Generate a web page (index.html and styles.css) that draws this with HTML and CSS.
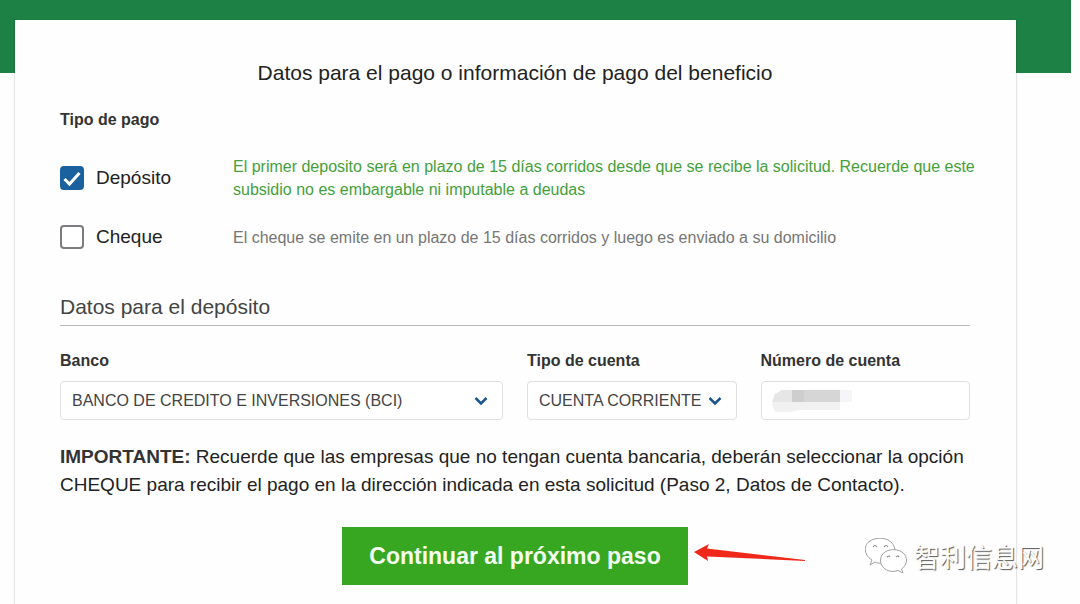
FILE: index.html
```html
<!DOCTYPE html>
<html lang="es">
<head>
<meta charset="utf-8">
<meta name="viewport" content="width=device-width, initial-scale=1">
<title>Datos para el pago</title>
<link rel="stylesheet" href="styles.css">
</head>
<body>
<div class="page">
  <main class="card">
    <h1 class="title">Datos para el pago o información de pago del beneficio</h1>
    <form class="form">
      <fieldset class="payment">
        <legend class="label">Tipo de pago</legend>
        <div class="option">
          <label class="choice">
            <span class="box">
              <input class="check" type="checkbox" name="deposito" checked>
              <svg class="tick" viewBox="0 0 24 24" aria-hidden="true"><path d="M4.5 13 9.5 18 19.5 7" fill="none" stroke="#fff" stroke-width="3"/></svg>
            </span>
            Depósito
          </label>
          <p class="hint hint-active">El primer deposito será en plazo de 15 días corridos desde que se recibe la solicitud. Recuerde que este subsidio no es embargable ni imputable a deudas</p>
        </div>
        <div class="option">
          <label class="choice">
            <span class="box"><input class="check" type="checkbox" name="cheque"></span>
            Cheque
          </label>
          <p class="hint">El cheque se emite en un plazo de 15 días corridos y luego es enviado a su domicilio</p>
        </div>
      </fieldset>

      <h2 class="subtitle">Datos para el depósito</h2>
      <div class="fields">
        <div class="field field-wide">
          <label class="label" for="banco">Banco</label>
          <div class="select">
            <select class="control" id="banco"><option>BANCO DE CREDITO E INVERSIONES (BCI)</option></select>
            <svg class="chevron" viewBox="0 0 14 10" aria-hidden="true"><path d="M1.5 2 7 7.5 12.500 2" fill="none" stroke="#1b5590" stroke-width="2.500"/></svg>
          </div>
        </div>
        <div class="field">
          <label class="label" for="tipo">Tipo de cuenta</label>
          <div class="select">
            <select class="control" id="tipo"><option>CUENTA CORRIENTE</option></select>
            <svg class="chevron" viewBox="0 0 14 10" aria-hidden="true"><path d="M1.5 2 7 7.5 12.500 2" fill="none" stroke="#1b5590" stroke-width="2.500"/></svg>
          </div>
        </div>
        <div class="field">
          <label class="label" for="numero">Número de cuenta</label>
          <div class="select">
            <input class="control" id="numero" type="text">
            <svg class="mask" viewBox="0 0 80 22" aria-hidden="true">
              <path d="M3 4 10 0H68V20H28L18 22H3L0 15Z" fill="#f1f1f1"/>
              <path d="M68 0H80V12H68Z" fill="#f6f6f8"/>
              <path d="M3 4 10 0H20V12H0Z" fill="#e6e6e6"/>
              <path d="M20 0H68V12H20Z" fill="#d6d6d6"/>
              <path d="M20 0H32V12H20Z" fill="#cecece"/>
            </svg>
          </div>
        </div>
      </div>

      <p class="notice"><strong>IMPORTANTE:</strong> Recuerde que las empresas que no tengan cuenta bancaria, deberán seleccionar la opción CHEQUE para recibir el pago en la dirección indicada en esta solicitud (Paso 2, Datos de Contacto).</p>

      <div class="actions">
        <button class="submit" type="button">Continuar al próximo paso</button>
        <svg class="arrow" viewBox="0 0 112 20" aria-hidden="true"><path d="M0 9 15 1 13 5.500 111 17V18L13 13.500 14 18Z" fill="#f0281a"/></svg>
      </div>
    </form>
  </main>
  <div class="watermark">
    <svg class="bubbles" viewBox="0 0 44 36" aria-hidden="true">
      <g fill="#fff" stroke="#a0a0a0" stroke-width="1" stroke-linejoin="round">
        <path d="M5 27 7 22C-2 17-1 6 5 3 15-3 29 1 30 12L18 25C15 25.500 12 25 10 24Z"/>
        <path d="M38 35 33 32.500C25 35.500 16 31 15.500 23 15 8 41 8 41.500 22 41.500 26 39.500 29 36.500 31Z"/>
      </g>
      <g fill="none" stroke="#8c8c8c" stroke-width="1.200">
        <path d="M8 9q2-3 4 0M19 9q2-3 4 0M22 19q2-2 3 0M31 19q2-2 3 0"/>
      </g>
    </svg>
    <span>智利信息网</span>
  </div>
</div>
</body>
</html>
```
FILE: styles.css
```css
* { box-sizing: border-box; }

body {
  margin: 0;
  background: #fefefe;
  color: #222;
  font-family: "Liberation Sans", Arial, "Noto Sans CJK SC", sans-serif;
}

.page {
  position: relative;
  min-height: 100vh;
  margin-right: 9px;
  padding: 20px 55px 0 15px;
  background: linear-gradient(#1d8045, #1d8045) top / 100% 73px no-repeat;
}

.card {
  min-height: calc(100vh - 20px);
  padding: 39px 46px 16px 45px;
  background: #fefefe;
  box-shadow: 0 1px 2px rgba(0, 0, 0, 0.3);
}

.title {
  margin: 0 0 23px;
  font-size: 21px;
  font-weight: 400;
  line-height: 28px;
  text-align: center;
}

.payment {
  display: flex;
  flex-direction: column;
  gap: 24px;
  margin: 0;
  padding: 0;
  border: 0;
}

.label {
  padding: 0;
  color: #333;
  font-size: 16px;
  font-weight: 700;
  line-height: 20px;
}

.payment .label { margin-bottom: 25px; }

.option {
  display: grid;
  grid-template-columns: 173px 1fr;
  align-items: center;
}

.choice {
  display: flex;
  align-items: center;
  gap: 12px;
  font-size: 19px;
}

.box { display: grid; width: 24px; height: 24px; }
.check, .tick { grid-area: 1 / 1; width: 24px; height: 24px; margin: 0; }
.check {
  appearance: none;
  border: 2px solid #7c7c80;
  border-radius: 4px;
  background: #fff;
}
.check:checked { border-color: #1a619d; background: #1a619d; }
.tick { pointer-events: none; }

.hint {
  margin: 0 -12px 0 0;
  color: #767676;
  font-size: 16px;
  line-height: 23px;
}
.hint-active { color: #45a03c; }

.subtitle {
  margin: 44px 0 25px;
  padding-bottom: 4px;
  border-bottom: 1px solid #b8b8b8;
  color: #444;
  font-size: 21px;
  font-weight: 400;
  line-height: 28px;
}

.fields {
  display: grid;
  grid-template-columns: repeat(4, 1fr);
  gap: 24px;
}
.field { display: flex; flex-direction: column; gap: 10px; min-width: 0; }
.field-wide { grid-column: span 2; }

.select { position: relative; }
.control {
  display: block;
  appearance: none;
  width: 100%;
  height: 39px;
  padding: 0 11px;
  border: 1px solid #e0e0e0;
  border-radius: 4px;
  background: #fff;
  color: #444;
  font: inherit;
  font-size: 16px;
}
.chevron { position: absolute; top: 15px; right: 15px; width: 14px; height: 10px; pointer-events: none; }
.mask { position: absolute; top: 9px; left: 11px; width: 80px; height: 22px; pointer-events: none; }

.notice { margin: 23px 0 28px; font-size: 19px; line-height: 28px; }
.notice strong { color: #333; }

.actions { position: relative; width: fit-content; margin: 0 auto; }
.submit {
  padding: 0 27px;
  border: 0;
  background: #37a722;
  color: #f4fff0;
  font: inherit;
  font-size: 23px;
  font-weight: 700;
  line-height: 58px;
}
.arrow { position: absolute; top: 16px; left: calc(100% + 6px); width: 112px; height: 20px; }

.watermark {
  position: absolute;
  right: 27px;
  bottom: 29px;
  display: flex;
  align-items: center;
  gap: 5px;
  color: #fff;
  font-family: "Noto Sans CJK SC", sans-serif;
  font-size: 26px;
  line-height: 38px;
  text-shadow: 1px 1px 1px #555;
}
.bubbles { width: 44px; height: 36px; }
```
